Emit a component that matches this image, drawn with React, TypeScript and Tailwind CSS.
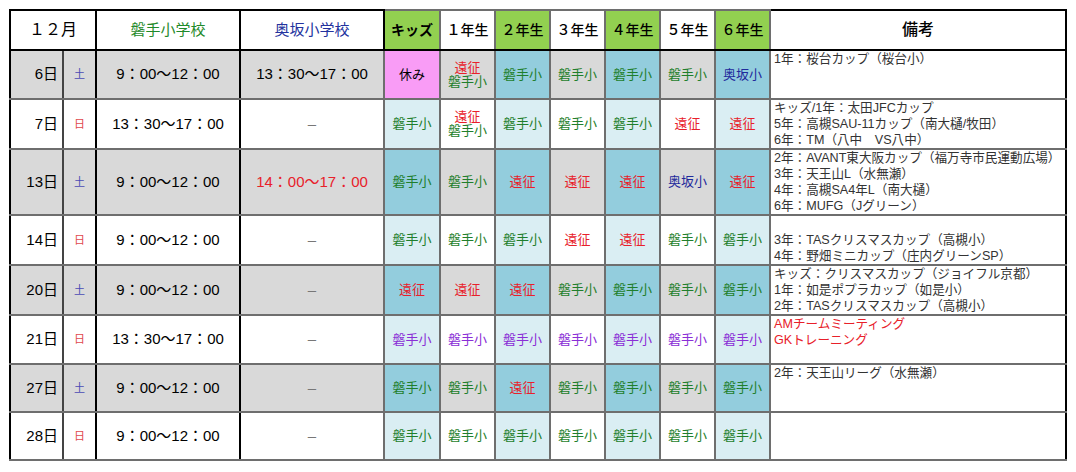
import React from "react";

type Cell = { t: string; c: string; pink?: boolean };
type Row = {
    day: string;
    wd: "土" | "日";
    iwate: string;
    osaka: string;
    osakaRed?: boolean;
    h: string;
    cells: Cell[];
    notes: string[];
    notesRed?: boolean;
};

// text colours for the grade cells
const colour: Record<string, string> = {
    g: "text-[#1f7f2c]",
    r: "text-[#e8202a]",
    n: "text-[#1f2a9c]",
    p: "text-[#8a2fd6]",
    k: "text-black",
};

const G = (t = "磐手小"): Cell => ({ t, c: "g" });
const R = (): Cell => ({ t: "遠征", c: "r" });
const N = (): Cell => ({ t: "奥坂小", c: "n" });
const P = (): Cell => ({ t: "磐手小", c: "p" });
const RG = (): Cell => ({ t: "遠征\n磐手小", c: "rg" });

const rows: Row[] = [
    {
        day: "6日", wd: "土", iwate: "9：00～12：00", osaka: "13：30～17：00", h: "h-[49px]",
        cells: [{ t: "休み", c: "k", pink: true }, RG(), G(), G(), G(), G(), N()],
        notes: ["1年：桜台カップ（桜台小）"],
    },
    {
        day: "7日", wd: "日", iwate: "13：30～17：00", osaka: "–", h: "h-[48px]",
        cells: [G(), RG(), G(), G(), G(), R(), R()],
        notes: ["キッズ/1年：太田JFCカップ", "5年：高槻SAU-11カップ（南大樋/牧田）", "6年：TM（八中　VS八中）"],
    },
    {
        day: "13日", wd: "土", iwate: "9：00～12：00", osaka: "14：00～17：00", osakaRed: true, h: "h-[65px]",
        cells: [G(), G(), R(), R(), R(), N(), R()],
        notes: ["2年：AVANT東大阪カップ（福万寺市民運動広場）", "3年：天王山L（水無瀬）", "4年：高槻SA4年L（南大樋）", "6年：MUFG（Jグリーン）"],
    },
    {
        day: "14日", wd: "日", iwate: "9：00～12：00", osaka: "–", h: "h-[48px]",
        cells: [G(), G(), G(), R(), R(), G(), G()],
        notes: ["", "3年：TASクリスマスカップ（高槻小）", "4年：野畑ミニカップ（庄内グリーンSP）"],
    },
    {
        day: "20日", wd: "土", iwate: "9：00～12：00", osaka: "–", h: "h-[48px]",
        cells: [R(), R(), R(), G(), G(), G(), G()],
        notes: ["キッズ：クリスマスカップ（ジョイフル京都）", "1年：如是ポプラカップ（如是小）", "2年：TASクリスマスカップ（高槻小）"],
    },
    {
        day: "21日", wd: "日", iwate: "13：30～17：00", osaka: "–", h: "h-[49px]",
        cells: [P(), P(), P(), P(), P(), P(), P()],
        notes: ["AMチームミーティング", "GKトレーニング"], notesRed: true,
    },
    {
        day: "27日", wd: "土", iwate: "9：00～12：00", osaka: "–", h: "h-[48px]",
        cells: [G(), G(), R(), G(), G(), G(), G()],
        notes: ["2年：天王山リーグ（水無瀬）"],
    },
    {
        day: "28日", wd: "日", iwate: "9：00～12：00", osaka: "–", h: "h-[48px]",
        cells: [G(), G(), G(), G(), G(), G(), G()],
        notes: [],
    },
];

const grades = [
    { t: "キッズ", green: true },
    { t: "１年生", green: false },
    { t: "２年生", green: true },
    { t: "３年生", green: false },
    { t: "４年生", green: true },
    { t: "５年生", green: false },
    { t: "６年生", green: true },
];

function cellBg(grayRow: boolean, blueCol: boolean, pink?: boolean) {
    if (pink) return "bg-[#f99cf6]";
    if (grayRow) return blueCol ? "bg-[#93cddd]" : "bg-[#d9d9d9]";
    return blueCol ? "bg-[#daeef3]" : "bg-white";
}

function GradeCell({ cell, bg }: { cell: Cell; bg: string }) {
    return (
        <td className={`border-2 border-[#6e6e6e] text-center align-middle text-[13px] leading-[14px] ${bg}`}>
            {cell.c === "rg" ? (
                <>
                    <div className="text-[#e8202a]">遠征</div>
                    <div className="text-[#1f7f2c]">磐手小</div>
                </>
            ) : (
                <span className={colour[cell.c]}>{cell.t}</span>
            )}
        </td>
    );
}

export default function App() {
    return (
        <div className="w-[1076px] h-[472px] bg-white pt-[9px] pl-[9px] font-['Liberation_Sans','Noto_Sans_CJK_JP',sans-serif] text-black">
            <table className="table-fixed border-collapse border-2 border-black w-[1056px]">
                <colgroup>
                    <col className="w-[53px]" />
                    <col className="w-[33px]" />
                    <col className="w-[144px]" />
                    <col className="w-[144px]" />
                    <col className="w-[56px]" />
                    <col className="w-[55px]" />
                    <col className="w-[55px]" />
                    <col className="w-[55px]" />
                    <col className="w-[55px]" />
                    <col className="w-[55px]" />
                    <col className="w-[55px]" />
                    <col className="w-[296px]" />
                </colgroup>
                <thead>
                    <tr className="h-[40px]">
                        <th colSpan={2} className="border-2 border-black bg-white text-[16px] font-normal">１２月</th>
                        <th className="border-2 border-black bg-white text-[15px] font-normal text-[#1f8a2a]">磐手小学校</th>
                        <th className="border-2 border-black bg-white text-[15px] font-normal text-[#23329e]">奥坂小学校</th>
                        {grades.map((g) => (
                            <th
                                key={g.t}
                                className={`border-2 border-[#6e6e6e] border-b-black text-[14px] ${g.t === "キッズ" ? "font-bold" : "font-medium"} ${g.green ? "bg-[#92d050]" : "bg-white"}`}
                            >
                                {g.t}
                            </th>
                        ))}
                        <th className="border-2 border-black bg-white text-[16px] font-medium">備考</th>
                    </tr>
                </thead>
                <tbody>
                    {rows.map((r, i) => {
                        const gray = i % 2 === 0;
                        const base = gray ? "bg-[#d9d9d9]" : "bg-white";
                        return (
                            <tr key={r.day} className={r.h}>
                                <td className={`border-2 border-[#6e6e6e] border-l-black border-r-[#444] text-right pr-[4px] text-[15px] ${base}`}>{r.day}</td>
                                <td className={`border-2 border-[#6e6e6e] border-l-[#444] border-r-black text-center text-[11px] ${r.wd === "土" ? "text-[#4b4bb5]" : "text-[#e0484c]"} ${base}`}>{r.wd}</td>
                                <td className={`border-2 border-[#6e6e6e] border-x-black text-center text-[15px] ${base}`}>{r.iwate}</td>
                                <td className={`border-2 border-[#6e6e6e] border-l-black text-center text-[15px] ${r.osaka === "–" ? "text-[#777]" : r.osakaRed ? "text-[#e8202a]" : "text-black"} ${base}`}>{r.osaka}</td>
                                {r.cells.map((c, j) => (
                                    <GradeCell key={j} cell={c} bg={cellBg(gray, j % 2 === 0, c.pink)} />
                                ))}
                                <td className={`border-2 border-[#6e6e6e] border-r-black bg-white align-top pl-[3px] text-[12.6px] leading-[16px] ${r.notesRed ? "text-[#e8202a]" : "text-[#333]"}`}>
                                    {r.notes.map((n, k) => (
                                        <div key={k} className="whitespace-nowrap h-[16px]">{n}</div>
                                    ))}
                                </td>
                            </tr>
                        );
                    })}
                </tbody>
            </table>
        </div>
    );
}
